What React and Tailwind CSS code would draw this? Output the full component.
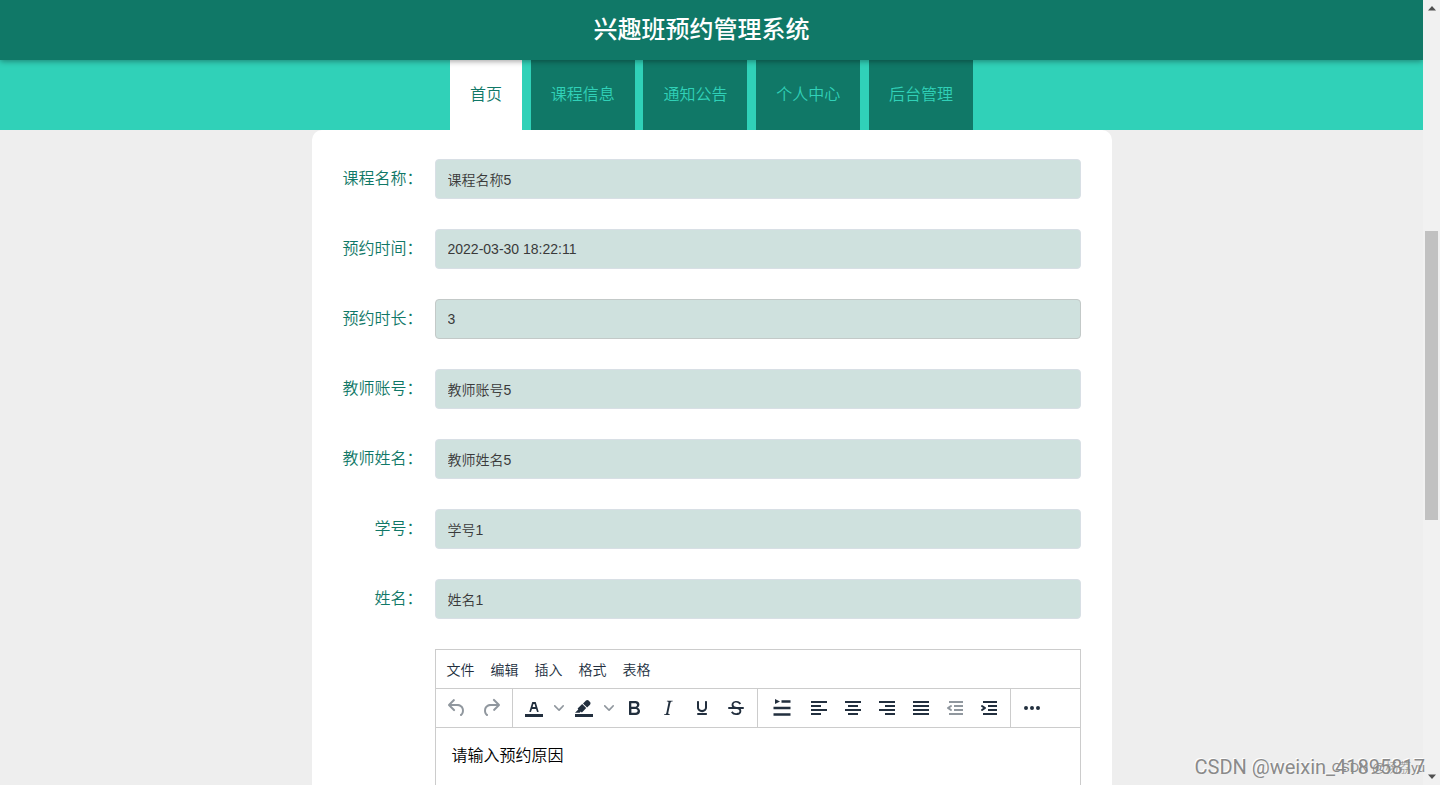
// 课程预约 — 兴趣班预约管理系统前台表单页

import { useState } from "react";

const TABS = ["首页", "课程信息", "通知公告", "个人中心", "后台管理"];

const FIELDS = [
  { id: "kechengmingcheng", label: "课程名称", value: "课程名称5", readOnly: true },
  { id: "yuyueshijian", label: "预约时间", value: "2022-03-30 18:22:11", readOnly: true },
  { id: "yuyueshichang", label: "预约时长", value: "3", readOnly: false },
  { id: "jiaoshizhanghao", label: "教师账号", value: "教师账号5", readOnly: true },
  { id: "jiaoshixingming", label: "教师姓名", value: "教师姓名5", readOnly: true },
  { id: "xuehao", label: "学号", value: "学号1", readOnly: true },
  { id: "xingming", label: "姓名", value: "姓名1", readOnly: true },
];

const MENUS = ["文件", "编辑", "插入", "格式", "表格"];

// 24x24 图标路径，每个图标一到两段
const ICONS = {
  undo: [
    "M6.4 8H12c3.7 0 6.2 2 6.8 5.1.6 2.7-.4 5.6-2.3 6.8a1 1 0 01-1-1.8c1.1-.6 1.8-2.7 1.4-4.6-.5-2.1-2.1-3.5-4.9-3.5H6.4l3.3 3.3a1 1 0 11-1.4 1.4l-5-5a1 1 0 010-1.4l5-5a1 1 0 011.4 1.4L6.4 8z",
  ],
  redo: [
    "M17.6 10H12c-2.8 0-4.4 1.4-4.9 3.5-.4 2 .3 4 1.4 4.6a1 1 0 11-1 1.8c-2-1.2-2.9-4.1-2.3-6.8.6-3 3-5.1 6.8-5.1h5.6l-3.3-3.3a1 1 0 111.4-1.4l5 5a1 1 0 010 1.4l-5 5a1 1 0 01-1.4-1.4l3.3-3.3z",
  ],
  color: [
    "M3 18h18v3H3z",
    "M8.7 16h-.8a.5.5 0 01-.5-.6l2.7-9c.1-.3.3-.4.5-.4h2.8c.2 0 .4.1.5.4l2.7 9a.5.5 0 01-.5.6h-.8a.5.5 0 01-.4-.4l-.7-2.2c0-.3-.3-.4-.5-.4h-3.4c-.2 0-.4.1-.5.4l-.7 2.2c0 .3-.2.4-.4.4zm2.6-7.6l-.6 2a.5.5 0 00.5.6h1.6a.5.5 0 00.5-.6l-.6-2c0-.3-.3-.4-.5-.4h-.4c-.2 0-.4.1-.5.4z",
  ],
  highlight: [
    "M3 18h18v3H3z",
    "M7.7 16.7H3l3.3-3.3-.7-.8L10.2 8l4 4.1-4 4.2c-.2.2-.6.2-.8 0l-.6-.7-1.1 1.1zm5-7.5L11 7.4l3-2.9a2 2 0 012.6 0L18 6c.7.7.7 2 0 2.7l-2.9 2.9-1.8-1.8-.5-.6",
  ],
  bold: [
    "M7.8 19c-.3 0-.5 0-.6-.2l-.2-.5V5.7c0-.2 0-.4.2-.5l.6-.2h5c1.5 0 2.7.3 3.5 1 .7.6 1.1 1.4 1.1 2.5a3 3 0 01-.6 1.9c-.4.6-1 1-1.6 1.2.4.1.9.3 1.3.6s.8.7 1 1.2c.4.4.5 1 .5 1.6 0 1.3-.4 2.3-1.3 3-.8.7-2.1 1-3.8 1H7.8zm5-8.3c.6 0 1.2-.1 1.6-.5.4-.3.6-.7.6-1.3 0-1.1-.8-1.7-2.3-1.7H9.3v3.5h3.4zm.5 6c.7 0 1.3-.1 1.7-.4.4-.4.6-.9.6-1.5s-.2-1-.7-1.4c-.4-.3-1-.4-2-.4H9.4v3.8h4z",
  ],
  italic: [
    "M16.7 4.7l-.1.9h-.3c-.6 0-1 0-1.4.3-.3.3-.4.6-.5 1.1l-2.1 9.8v.6c0 .5.4.8 1.4.8h.2l-.2.8H8l.2-.8h.2c1.1 0 1.8-.5 2-1.5l2-9.8.1-.5c0-.6-.4-.8-1.4-.8h-.3l.2-.9h5.8z",
  ],
  underline: [
    "M16 5c.6 0 1 .4 1 1v5.500a4 4 0 01-.4 1.800l-1 1.400a5.300 5.300 0 01-5.500 1 5 5 0 01-1.600-1c-.5-.4-.8-.9-1.100-1.400a4 4 0 01-.4-1.800V6c0-.6.4-1 1-1s1 .4 1 1v5.500c0 .3 0 .6.2 1l.6.7a3.300 3.300 0 002.200.8 3.400 3.400 0 002.200-.8c.3-.2.4-.5.6-.8l.2-.9V6c0-.6.4-1 1-1z",
    "M8 17h8c.6 0 1 .4 1 1s-.4 1-1 1H8a1 1 0 010-2z",
  ],
  strike: [
    "M15.6 8.5c-.5-.7-1-1.1-1.3-1.3-.6-.4-1.3-.6-2-.6-2.7 0-2.8 1.7-2.8 2.1 0 1.6 1.8 2 3.2 2.3 4.4.9 4.6 2.8 4.6 3.9 0 1.4-.7 4.1-5 4.1A6.2 6.2 0 017 16.4l1.5-1.1c.4.6 1.6 2 3.7 2 1.6 0 2.5-.4 3-1.2.4-.8.3-2-.8-2.6-.7-.4-1.6-.7-2.9-1-1-.2-3.9-.8-3.9-3.6C7.6 6 10.3 5 12.4 5c2.9 0 4.2 1.6 4.7 2.4l-1.5 1.1z",
    "M5 11h14a1 1 0 010 2H5a1 1 0 010-2z",
  ],
  left: ["M4 5h16v2H4zM4 9h10v2H4zM4 13h16v2H4zM4 17h10v2H4z"],
  center: ["M4 5h16v2H4zM7 9h10v2H7zM4 13h16v2H4zM7 17h10v2H7z"],
  right: ["M4 5h16v2H4zM10 9h10v2H10zM4 13h16v2H4zM10 17h10v2H10z"],
  justify: ["M4 5h16v2H4zM4 9h16v2H4zM4 13h16v2H4zM4 17h16v2H4z"],
  outdent: [
    "M6 5h14v2H6zM11 9h9v2h-9zM11 13h9v2h-9zM6 17h14v2H6z",
    "M8.6 13.2a1 1 0 01-1.2 1.6l-3-2a1 1 0 010-1.6l3-2a1 1 0 011.2 1.6L6.8 12l1.8 1.2z",
  ],
  indent: [
    "M6 5h14v2H6zM11 9h9v2h-9zM11 13h9v2h-9zM6 17h14v2H6z",
    "M4.4 13.2L6.2 12l-1.8-1.2a1 1 0 011.2-1.6l3 2a1 1 0 010 1.6l-3 2a1 1 0 11-1.2-1.6z",
  ],
  more: [
    "M6 10a2 2 0 100 4 2 2 0 000-4zm12 0a2 2 0 100 4 2 2 0 000-4zm-6 0a2 2 0 100 4 2 2 0 000-4z",
  ],
  lineHeight: [
    "M5 3l5 2.5L5 8z",
    "M11.5 4.3h9v2.4h-9zM3.5 10.8h17v2.4h-17zM3.5 17.3h17v2.4h-17z",
  ],
};

function ToolButton({ icon, label, disabled, wide }) {
  return (
    <button
      type="button"
      aria-label={label}
      disabled={disabled}
      className={`flex h-[34px] items-center justify-center ${wide ? "w-10" : "w-[34px]"} ${
        disabled ? "text-[#222f3e]/50" : "text-[#222f3e]"
      }`}
    >
      <svg width="24" height="24" viewBox="0 0 24 24" fill="currentColor" fillRule="evenodd">
        {ICONS[icon].map((d) => (
          <path key={d} d={d} />
        ))}
      </svg>
    </button>
  );
}

function Chevron({ label }) {
  return (
    <button
      type="button"
      aria-label={label}
      className="flex h-[34px] w-4 items-center justify-center text-[#222f3e]/50"
    >
      <svg width="10" height="10" viewBox="0 0 10 10" fill="currentColor">
        <path d="M8.7 2.2c.3-.3.8-.3 1 0 .4.4.4.9 0 1.2L5.7 7.8c-.3.3-.9.3-1.2 0L.2 3.4a.8.8 0 010-1.2c.3-.3.8-.3 1.1 0L5 6l3.7-3.8z" />
      </svg>
    </button>
  );
}

function ToolGroup({ children, last }) {
  return (
    <div className={`flex h-[38px] items-center px-1 ${last ? "" : "border-r border-[#ccc]"}`}>
      {children}
    </div>
  );
}

function Editor() {
  const [text, setText] = useState("请输入预约原因");
  return (
    <div className="border border-[#ccc] bg-white">
      <div className="flex h-[38px] items-center px-[3px] pt-[2px]">
        {MENUS.map((m) => (
          <button key={m} type="button" className="px-2 text-sm font-[350] text-[#222f3e]">
            {m}
          </button>
        ))}
      </div>
      <div className="flex border-y border-[#ccc]">
        <ToolGroup>
          <ToolButton icon="undo" label="撤销" disabled />
          <ToolButton icon="redo" label="重做" disabled />
        </ToolGroup>
        <ToolGroup>
          <ToolButton icon="color" label="文字颜色" />
          <Chevron label="选择文字颜色" />
          <ToolButton icon="highlight" label="背景颜色" />
          <Chevron label="选择背景颜色" />
          <ToolButton icon="bold" label="粗体" />
          <ToolButton icon="italic" label="斜体" />
          <ToolButton icon="underline" label="下划线" />
          <ToolButton icon="strike" label="删除线" />
        </ToolGroup>
        <ToolGroup>
          <ToolButton icon="lineHeight" label="行高" wide />
          <ToolButton icon="left" label="左对齐" />
          <ToolButton icon="center" label="居中" />
          <ToolButton icon="right" label="右对齐" />
          <ToolButton icon="justify" label="两端对齐" />
          <ToolButton icon="outdent" label="减少缩进" disabled />
          <ToolButton icon="indent" label="增加缩进" />
        </ToolGroup>
        <ToolGroup last>
          <ToolButton icon="more" label="更多" />
        </ToolGroup>
      </div>
      <textarea
        aria-label="预约原因"
        value={text}
        onChange={(e) => setText(e.target.value)}
        className="block h-60 w-full resize-none p-4 text-base font-[350] text-black outline-none"
      />
    </div>
  );
}

function Field({ field }) {
  const [value, setValue] = useState(field.value);
  return (
    <div className="flex items-center gap-3">
      <label
        htmlFor={field.id}
        className="w-20 shrink-0 text-right text-base font-[350] whitespace-nowrap text-[#107867]"
      >
        {field.label}：
      </label>
      <input
        id={field.id}
        type="text"
        value={value}
        readOnly={field.readOnly}
        onChange={(e) => setValue(e.target.value)}
        className={`h-10 min-w-0 flex-1 rounded border bg-[#cfe1de] px-3 text-sm font-[350] text-[#3a3a3a] outline-none ${
          field.readOnly ? "border-[#d8dfe5]" : "border-[#c3c9c8]"
        }`}
      />
    </div>
  );
}

function ScrollRail() {
  return (
    <div className="flex w-[17px] shrink-0 flex-col items-center justify-between bg-[#f1f1f1] py-[6px]">
      <svg width="8" height="5" viewBox="0 0 8 5" fill="#505050">
        <path d="M4 0l4 4.5H0z" />
      </svg>
      <div className="flex w-full flex-1 flex-col px-[2px] pt-[220px]">
        <div className="h-[289px] bg-[#c1c1c1]" />
      </div>
      <svg width="8" height="5" viewBox="0 0 8 5" fill="#505050">
        <path d="M0 .5h8L4 5z" />
      </svg>
    </div>
  );
}

export default function App() {
  const [active, setActive] = useState(0);
  return (
    <div className="relative flex h-screen overflow-hidden bg-[#eee] font-['Liberation_Sans','Noto_Sans_CJK_SC',sans-serif]">
      <div className="min-w-0 flex-1 overflow-hidden">
        <header className="relative z-10 flex h-[60px] items-center justify-center bg-[#107867] pr-5 shadow-[0_1px_6px_rgba(0,0,0,0.4)]">
          <h1 className="text-2xl font-medium text-white">兴趣班预约管理系统</h1>
        </header>
        <nav className="bg-[#30d1b8]">
          <div className="mx-auto flex h-[70px] max-w-[523px] justify-between">
            {TABS.map((t, i) => (
              <a
                key={t}
                href="#"
                onClick={() => setActive(i)}
                className={`flex items-center px-5 text-base font-[350] ${
                  i === active ? "bg-white text-[#107867]" : "bg-[#107867] text-[#30d1b8]"
                }`}
              >
                {t}
              </a>
            ))}
          </div>
        </nav>
        <main className="mx-auto max-w-[800px] rounded-[10px] bg-white px-[31px] pt-[29px] pb-8">
          <form className="flex flex-col gap-[30px]">
            {FIELDS.map((f) => (
              <Field key={f.id} field={f} />
            ))}
            <div className="pl-[92px]">
              <Editor />
            </div>
          </form>
        </main>
      </div>
      <ScrollRail />
      {/* 右下角水印 */}
      <div className="pointer-events-none absolute right-[15px] bottom-1 z-20 font-['Roboto',sans-serif] text-xl text-[#8a8a8a] [text-shadow:-1px_-1px_0_#fff]">
        CSDN @weixin_41895817
      </div>
      <div className="pointer-events-none absolute right-[15px] bottom-2 z-20 text-[13px] font-light text-[#8a8a8a]">
        CSDN @杨荔yu
      </div>
    </div>
  );
}
